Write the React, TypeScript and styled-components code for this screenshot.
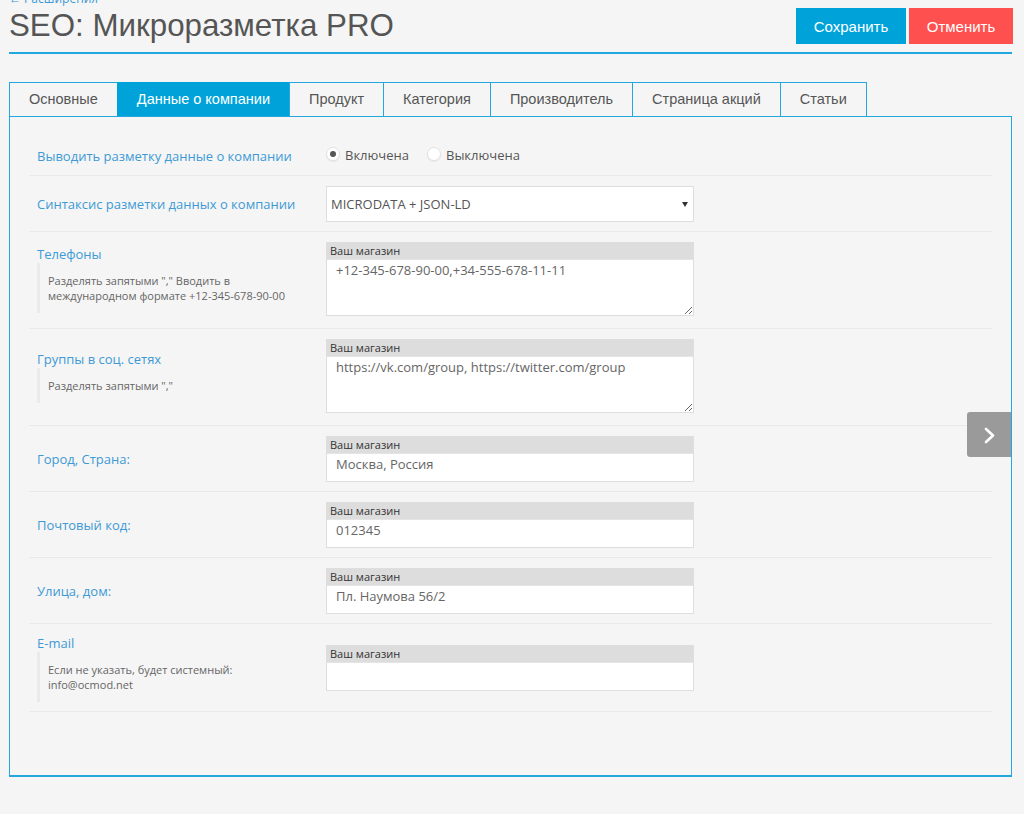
import React from "react";
import styled, { createGlobalStyle } from "styled-components";

const Global = createGlobalStyle`
  html, body { margin: 0; padding: 0; background: #f5f5f5; }
  body { font-family: "Open Sans", "Liberation Sans", sans-serif; }
  * { box-sizing: border-box; }
`;

const Page = styled.div`
  padding: 0 12px 0 9px;
  height: 814px;
  overflow: hidden;
`;

const Header = styled.div`
  display: flex;
  justify-content: space-between;
  align-items: flex-start;
  border-bottom: 2px solid #22a8de;
  padding-bottom: 6px;
`;

const TitleBlock = styled.div`
  display: flex;
  flex-direction: column;
`;

const BackLink = styled.a`
  font-family: "Open Sans", sans-serif;
  font-size: 12px;
  line-height: 14px;
  margin-top: -8px;
  color: #3d9ad6;
  text-decoration: none;
`;

const Title = styled.h1`
  margin: 0;
  font-family: "Liberation Sans", Arial, sans-serif;
  font-weight: normal;
  font-size: 31.3px;
  line-height: 40px;
  color: #555;
`;

const Buttons = styled.div`
  display: flex;
  gap: 3px;
  margin-top: 8px;
  margin-right: -1px;
`;

const Button = styled.button<{ $variant: "save" | "cancel" }>`
  height: 36px;
  border: none;
  padding: 0;
  width: ${(p) => (p.$variant === "save" ? "110px" : "104px")};
  background: ${(p) => (p.$variant === "save" ? "#00a3d9" : "#ff5050")};
  color: #fff;
  font-family: "Liberation Sans", Arial, sans-serif;
  font-size: 15px;
  cursor: pointer;
`;

const Tabs = styled.div`
  display: flex;
  margin-top: 28px;
`;

const Tab = styled.div<{ $active?: boolean }>`
  height: 34px;
  line-height: 33px;
  padding: 0 19px;
  border: 1px solid ${(p) => (p.$active ? "#00a3d9" : "#22a8de")};
  border-bottom: none;
  margin-left: -1px;
  &:first-child { margin-left: 0; }
  background: ${(p) => (p.$active ? "#00a3d9" : "#f5f5f5")};
  color: ${(p) => (p.$active ? "#fff" : "#555")};
  font-family: "Liberation Sans", Arial, sans-serif;
  font-size: 14.5px;
  white-space: nowrap;
`;

const Panel = styled.div`
  position: relative;
  border: 1px solid #22a8de;
  border-bottom-width: 2px;
  padding: 19px 19px 63px;
`;

const Row = styled.div<{ $gap?: boolean }>`
  display: grid;
  grid-template-columns: 289px 368px;
  align-items: center;
  padding: 10px 0 ${(p) => (p.$gap ? "12px" : "9px")} 8px;
  border-bottom: 1px solid #e9e9e9;
`;

const LabelCol = styled.div`
  display: flex;
  flex-direction: column;
`;

const Label = styled.div<{ $tall?: boolean }>`
  font-size: 13px;
  line-height: ${(p) => (p.$tall ? "20px" : "18px")};
  color: #3d9ad6;
`;

const Help = styled.div`
  border-left: 3px solid #eaeaea;
  padding: 10px 0 10px 8px;
  font-size: 11px;
  line-height: 15px;
  color: #666;
`;

const Radios = styled.div`
  display: flex;
  gap: 18px;
  align-items: center;
  margin-top: -2px;
`;

const RadioLabel = styled.label`
  display: inline-flex;
  align-items: center;
  gap: 5px;
  font-size: 13px;
  line-height: 20px;
  color: #555;
`;

const RadioCircle = styled.span<{ $checked?: boolean }>`
  width: 14px;
  height: 14px;
  border-radius: 50%;
  background: #fff;
  border: 1px solid #e2e2e2;
  box-shadow: 0 1px 1px rgba(0, 0, 0, 0.06);
  display: inline-flex;
  align-items: center;
  justify-content: center;
  margin-top: -3px;
  &::after {
    content: "";
    width: 6px;
    height: 6px;
    border-radius: 50%;
    background: ${(p) => (p.$checked ? "#555" : "transparent")};
  }
`;

const SelectWrap = styled.div`
  position: relative;
  &::after {
    content: "";
    position: absolute;
    right: 6px;
    top: 16px;
    border-left: 3px solid transparent;
    border-right: 3px solid transparent;
    border-top: 5px solid #333;
  }
`;

const Select = styled.select`
  appearance: none;
  -webkit-appearance: none;
  display: block;
  width: 368px;
  height: 36px;
  border: 1px solid #ddd;
  border-radius: 0;
  background: #fff;
  padding: 0 0 0 4px;
  font-family: "Open Sans", sans-serif;
  font-size: 13px;
  color: #555;
  outline: none;
`;

const Group = styled.div`
  width: 368px;
  border: 1px solid #dedede;
  background: #fff;
`;

const GroupHead = styled.div`
  height: 16px;
  line-height: 16px;
  background: #dddddd;
  padding-left: 3px;
  font-size: 11px;
  color: #333;
`;

const TextArea = styled.textarea`
  display: block;
  width: 100%;
  height: 56px;
  border: none;
  border-top: 1px solid #e4e4e4;
  padding: 0 9px;
  font-family: "Open Sans", sans-serif;
  font-size: 13px;
  line-height: 20px;
  color: #666;
  background: #fff;
  outline: none;
`;

const Input = styled.input`
  display: block;
  width: 100%;
  height: 28px;
  border: none;
  border-top: 1px solid #e4e4e4;
  padding: 0 9px 7px;
  font-family: "Open Sans", sans-serif;
  font-size: 13px;
  color: #666;
  background: #fff;
  outline: none;
`;

const NextButton = styled.button`
  position: absolute;
  right: 0;
  top: 295px;
  width: 44px;
  height: 45px;
  border: none;
  border-radius: 3px 0 0 3px;
  background: #9a9a9a;
  padding: 0;
  display: flex;
  align-items: center;
  justify-content: center;
  cursor: pointer;
`;

const tabs = [
  "Основные",
  "Данные о компании",
  "Продукт",
  "Категория",
  "Производитель",
  "Страница акций",
  "Статьи",
];

const InputRow = ({ label, value }: { label: string; value: string }) => (
  <Row>
    <LabelCol>
      <Label $tall>{label}</Label>
    </LabelCol>
    <Group>
      <GroupHead>Ваш магазин</GroupHead>
      <Input defaultValue={value} />
    </Group>
  </Row>
);

export default function App() {
  return (
    <>
      <Global />
      <Page>
        <Header>
          <TitleBlock>
            <BackLink href="#">← Расширения</BackLink>
            <Title>SEO: Микроразметка PRO</Title>
          </TitleBlock>
          <Buttons>
            <Button $variant="save">Сохранить</Button>
            <Button $variant="cancel">Отменить</Button>
          </Buttons>
        </Header>

        <Tabs>
          {tabs.map((t, i) => (
            <Tab key={t} $active={i === 1}>
              {t}
            </Tab>
          ))}
        </Tabs>

        <Panel>
          <Row>
            <LabelCol>
              <Label $tall>Выводить разметку данные о компании</Label>
            </LabelCol>
            <Radios>
              <RadioLabel>
                <RadioCircle $checked />
                Включена
              </RadioLabel>
              <RadioLabel>
                <RadioCircle />
                Выключена
              </RadioLabel>
            </Radios>
          </Row>

          <Row>
            <LabelCol>
              <Label $tall>Синтаксис разметки данных о компании</Label>
            </LabelCol>
            <SelectWrap>
              <Select defaultValue="both">
                <option value="both">MICRODATA + JSON-LD</option>
                <option value="micro">MICRODATA</option>
                <option value="json">JSON-LD</option>
              </Select>
            </SelectWrap>
          </Row>

          <Row $gap>
            <LabelCol>
              <Label>Телефоны</Label>
              <Help>
                Разделять запятыми "," Вводить в
                <br />
                международном формате +12-345-678-90-00
              </Help>
            </LabelCol>
            <Group>
              <GroupHead>Ваш магазин</GroupHead>
              <TextArea defaultValue="+12-345-678-90-00,+34-555-678-11-11" />
            </Group>
          </Row>

          <Row $gap>
            <LabelCol>
              <Label>Группы в соц. сетях</Label>
              <Help>Разделять запятыми ","</Help>
            </LabelCol>
            <Group>
              <GroupHead>Ваш магазин</GroupHead>
              <TextArea defaultValue="https://vk.com/group, https://twitter.com/group" />
            </Group>
          </Row>

          <InputRow label="Город, Страна:" value="Москва, Россия" />
          <InputRow label="Почтовый код:" value="012345" />
          <InputRow label="Улица, дом:" value="Пл. Наумова 56/2" />

          <Row>
            <LabelCol>
              <Label>E-mail</Label>
              <Help>
                Если не указать, будет системный:
                <br />
                info@ocmod.net
              </Help>
            </LabelCol>
            <Group>
              <GroupHead>Ваш магазин</GroupHead>
              <Input defaultValue="" />
            </Group>
          </Row>

          <NextButton aria-label="Далее">
            <svg width="44" height="45" viewBox="0 0 44 45">
              <polyline
                points="19,17 26,23.5 19,30"
                fill="none"
                stroke="#fff"
                strokeWidth="2.6"
                strokeLinecap="round"
                strokeLinejoin="round"
              />
            </svg>
          </NextButton>
        </Panel>
      </Page>
    </>
  );
}
